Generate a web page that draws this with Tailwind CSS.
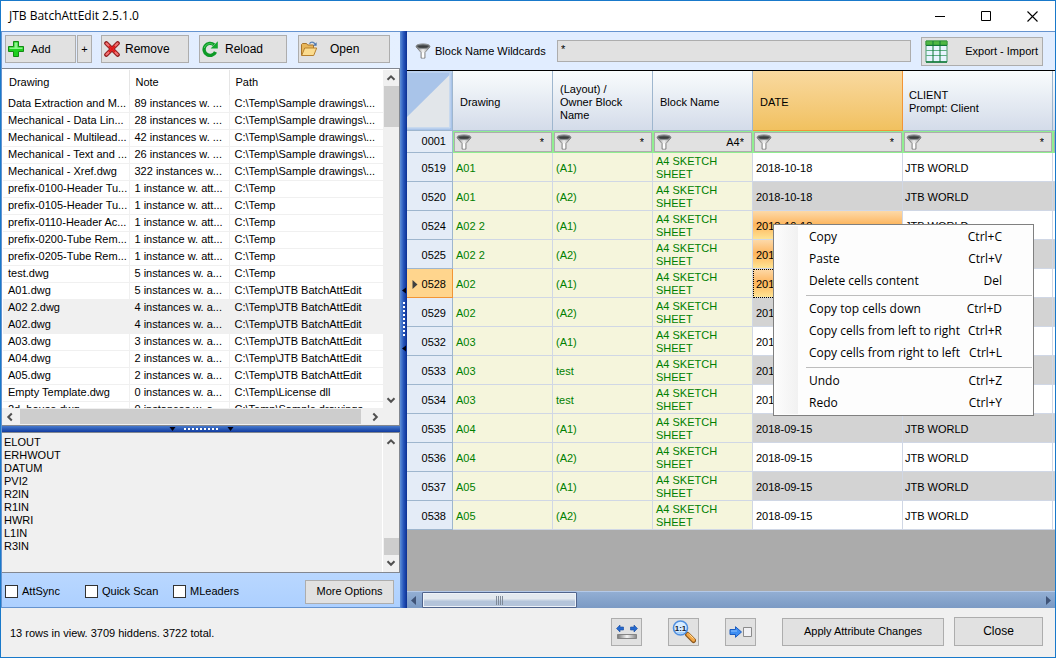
<!DOCTYPE html>
<html lang="en">
<head>
  <meta charset="UTF-8" />
  <meta name="viewport" content="width=device-width, initial-scale=1.0"/>
  <title>JTB BatchAttEdit 2.5.1.0</title>
  <script src="https://cdn.jsdelivr.net/npm/@tailwindcss/browser@4"></script>
</head>
<body class="h-screen overflow-hidden bg-[#f0f0f0] text-black text-[11px] leading-[13px] font-['Liberation_Sans',sans-serif]">

  <!-- Shared icons -->
  <svg class="absolute size-0">
    <linearGradient id="metal" x1="0" x2="1"><stop offset="0" stop-color="#777"/><stop offset=".5" stop-color="#f4f4f4"/><stop offset="1" stop-color="#888"/></linearGradient>
    <symbol id="funnel" viewBox="0 0 16 16">
      <path d="M1.200 4 6 9.500v5.600h4V9.500L14.800 4z" fill="url(#metal)" stroke="#777" stroke-width=".8"/>
      <path d="M7 9.500v5h2v-5z" fill="#fff"/>
      <ellipse cx="8" cy="3.300" rx="7" ry="2.400" fill="#5e6264" stroke="#8e9294"/>
      <ellipse cx="8" cy="3.600" rx="5" ry="1.200" fill="#3c3f40"/>
    </symbol>
    <symbol id="up" viewBox="0 0 16 16"><path d="M4.500 9.800 8 6.300l3.500 3.500" fill="none" stroke="#505050" stroke-width="2"/></symbol>
    <symbol id="down" viewBox="0 0 16 16"><path d="M4.500 6.300 8 9.800l3.500-3.500" fill="none" stroke="#505050" stroke-width="2"/></symbol>
    <symbol id="left" viewBox="0 0 16 16"><path d="M9.800 4.500 6.300 8l3.500 3.500" fill="none" stroke="#505050" stroke-width="2"/></symbol>
    <symbol id="right" viewBox="0 0 16 16"><path d="M6.300 4.500 9.800 8l-3.500 3.500" fill="none" stroke="#505050" stroke-width="2"/></symbol>
  </svg>

  <div class="flex h-full flex-col border border-[#1979ca]">

    <!-- Title bar -->
    <header class="flex h-[30px] shrink-0 items-center bg-white pl-2">
      <h1 class="flex-1 text-[12px] leading-4 font-['Open_Sans',sans-serif]">JTB BatchAttEdit 2.5.1.0</h1>
      <button aria-label="Minimize" class="flex h-full w-[46px] items-center justify-center"><svg class="size-[11px]" viewBox="0 0 11 11"><path d="M0 5.500h10" stroke="#000"/></svg></button>
      <button aria-label="Maximize" class="flex h-full w-[46px] items-center justify-center"><svg class="size-[11px]" viewBox="0 0 11 11"><path d="M.5.5h9v9h-9z" fill="none" stroke="#000"/></svg></button>
      <button aria-label="Close window" class="flex h-full w-[46px] items-center justify-center"><svg class="size-[11px]" viewBox="0 0 11 11"><path d="m.5.5 10 10m0-10-10 10" stroke="#000" stroke-width="1.100"/></svg></button>
    </header>

    <main class="flex min-h-0 flex-1">

      <!-- Drawings pane -->
      <section class="flex w-[399px] shrink-0 flex-col border-t border-l border-[#6593cf]">
        <div class="flex h-9 shrink-0 items-start bg-linear-to-r from-[#dfebff] to-[#e5f0ff] pt-[3px] pl-[3px]">
          <button class="flex h-7 w-[71px] items-center gap-[7px] border border-[#adadad] bg-[#e1e1e1] pl-[2px]">
            <svg class="size-4" viewBox="0 0 16 16"><path d="M5.500.5h5v5h5v5h-5v5h-5v-5h-5v-5h5z" fill="#1fd01f" stroke="#138a13"/><path d="M6.500 1.500h3v5h5v1.500h-13V6.500h5z" fill="#8df58d"/></svg>
            Add
          </button>
          <button class="mr-[9px] ml-px h-7 w-[15px] border border-[#adadad] bg-[#e1e1e1]">+</button>
          <button class="mr-[10px] flex h-7 w-[88px] items-center gap-[5px] border border-[#adadad] bg-[#e1e1e1] pl-[2px] text-[12px]">
            <svg class="size-4" viewBox="0 0 16 16"><path d="m2.300 2.300 11.400 11.400m0-11.400L2.300 13.700" stroke="#8c1616" stroke-width="4.200" stroke-linecap="round"/><path d="m2.500 2.500 11 11m0-11-11 11" stroke="#f27070" stroke-width="2.400" stroke-linecap="round"/><path d="m5 5 6 6m0-6-6 6" stroke="#e01818" stroke-width="2"/></svg>
            Remove
          </button>
          <button class="mr-[11px] flex h-7 w-[88px] items-center gap-[7px] border border-[#adadad] bg-[#e1e1e1] pl-[2px] text-[12px]">
            <svg class="size-4" viewBox="0 0 16 16"><path d="M12 3.800A6 6 0 1 0 13.500 11" fill="none" stroke="#0c9a26" stroke-width="3.400"/><path d="M15.800.3v7.200H8.600z" fill="#14a82e"/><path d="M11 3.400A6 6 0 0 0 2.200 7" fill="none" stroke="#4fce5f"/></svg>
            Reload
          </button>
          <button class="flex h-7 w-[92px] items-center gap-[13px] border border-[#adadad] bg-[#e1e1e1] pl-[2px] text-[12px]">
            <svg class="size-4" viewBox="0 0 16 16"><path d="M.5 14.500v-11l1-1h4l1.200 1.500h5.800v3" fill="#e8b659" stroke="#a8742a"/><path d="m.7 14.500 3-7.500h12l-3 7.500z" fill="#fbdc8f" stroke="#b7812f"/><path d="M8.500 2.700C9.500.7 12.500.3 14 3" fill="none" stroke="#5b83b4" stroke-width="1.300"/><path d="M15.600 1.200v3.600H12z" fill="#4773aa"/></svg>
            Open
          </button>
        </div>

        <!-- Drawing list -->
        <div class="flex min-h-0 flex-[359_1_0%] flex-col border border-l-0 border-[#828790] bg-white">
          <div class="flex min-h-0 flex-1 pt-px">
            <div class="min-w-0 flex-1 overflow-hidden pl-px">
              <table class="w-full table-fixed border-collapse">
                <colgroup><col class="w-[126px]"><col class="w-[100px]"><col></colgroup>
                <thead>
                  <tr class="h-[25px] text-left">
                    <th class="border-r border-[#e5e5e5] pl-[6px] font-normal">Drawing</th>
                    <th class="border-r border-[#e5e5e5] pl-[6px] font-normal">Note</th>
                    <th class="pl-[6px] font-normal">Path</th>
                  </tr>
                </thead>
                <tbody id="drawings"></tbody>
              </table>
            </div>
            <div class="flex w-4 shrink-0 flex-col items-center bg-[#f0f0f0]">
              <svg class="size-4"><use href="#up"/></svg>
              <div class="h-[41px] w-[15px] bg-[#cdcdcd]"></div>
              <svg class="mt-auto size-4"><use href="#down"/></svg>
            </div>
          </div>
          <div class="flex h-[17px] shrink-0 items-center bg-[#f0f0f0] pr-4">
            <svg class="mr-[2px] size-4"><use href="#left"/></svg>
            <div class="mr-[6px] h-[15px] flex-1 bg-[#cdcdcd]"></div>
            <svg class="size-4"><use href="#right"/></svg>
          </div>
        </div>

        <!-- Horizontal splitter -->
        <div class="flex h-[6px] shrink-0 items-center justify-center gap-2 bg-linear-to-b from-[#4679cd] to-[#123ba0]">
          <svg class="h-1 w-[7px]" viewBox="0 0 7 4"><path d="M.5 0h6l-3 4z" fill="#001"/></svg>
          <svg class="h-1 w-[35px]" viewBox="0 0 35 4"><path d="M0 2h35" stroke="#fff" stroke-width="2" stroke-dasharray="2 2"/></svg>
          <svg class="h-1 w-[7px]" viewBox="0 0 7 4"><path d="M.5 0h6l-3 4z" fill="#001"/></svg>
        </div>

        <!-- Attribute tags -->
        <div class="flex min-h-0 flex-[140_1_0%] border border-l-0 border-[#828790] bg-[#f0f0f0]">
          <textarea readonly aria-label="Attribute tags" class="min-w-0 flex-1 resize-none overflow-hidden border-r border-white px-[2px] pt-[3px] outline-none">ELOUT
ERHWOUT
DATUM
PVI2
R2IN
R1IN
HWRI
L1IN
R3IN</textarea>
          <div class="flex w-4 shrink-0 flex-col items-center py-px">
            <svg class="size-4"><use href="#up"/></svg>
            <div class="mt-auto h-[17px] w-[15px] bg-[#cdcdcd]"></div>
            <svg class="size-4"><use href="#down"/></svg>
          </div>
        </div>

        <!-- Options -->
        <div class="flex h-[35px] shrink-0 items-center border-b border-[#6593cf] bg-linear-to-b from-[#b9d7ff] to-[#add0ff] pt-[3px] pr-[6px] pl-[3px]">
          <label class="flex w-20 items-center gap-1"><input type="checkbox" class="size-[13px] appearance-none border border-[#333] bg-white">AttSync</label>
          <label class="flex w-[88px] items-center gap-1"><input type="checkbox" class="size-[13px] appearance-none border border-[#333] bg-white">Quick Scan</label>
          <label class="flex items-center gap-1"><input type="checkbox" class="size-[13px] appearance-none border border-[#333] bg-white">MLeaders</label>
          <button class="ml-auto h-6 w-[89px] border border-[#adadad] bg-[#e1e1e1]">More Options</button>
        </div>
      </section>

      <!-- Vertical splitter -->
      <div class="flex w-[7px] shrink-0 flex-col items-center justify-center gap-2 bg-linear-to-r from-[#5f90d8] via-[#2856bb] to-[#0b2f93]">
        <svg class="h-[7px] w-1" viewBox="0 0 4 7"><path d="M4 .5v6l-4-3z" fill="#001"/></svg>
        <svg class="h-[35px] w-1" viewBox="0 0 4 35"><path d="M2 0v35" stroke="#fff" stroke-width="2" stroke-dasharray="2 2"/></svg>
        <svg class="h-[7px] w-1" viewBox="0 0 4 7"><path d="M4 .5v6l-4-3z" fill="#001"/></svg>
      </div>

      <!-- Block grid pane -->
      <section class="flex min-w-0 flex-1 flex-col border-t border-[#6593cf]">
        <div class="flex h-[39px] shrink-0 items-center border-b border-black bg-[#e1edff] pr-[12px] pl-2">
          <svg class="mr-1 size-4"><use href="#funnel"/></svg>
          <label for="wildcards" class="w-[122px]">Block Name Wildcards</label>
          <input id="wildcards" type="text" value="*" class="mr-[10px] h-[22px] min-w-0 flex-1 border border-[#adadad] bg-[#e1e1e1] px-[3px] pb-1 outline-none">
          <button class="flex h-[29px] w-[122px] items-center justify-between border border-[#adadad] bg-[#e1e1e1] pr-1 pl-[3px]">
            <svg class="size-[23px]" viewBox="0 0 23 23"><path d="M1 1h21v21H1z" fill="#e8f4ff" stroke="#4a9a6a"/><path d="M1 1h21v4H1z" fill="#4fb844" stroke="#3a9a3a"/><path d="M1 10.500h21M1 15.500h21" stroke="#5fae84"/><path d="M1 5.500h21M8 1v21M15 1v21" stroke="#0f7838"/><path d="M1 22h21" stroke="#0f7838" stroke-width="1.500"/></svg>
            Export - Import
          </button>
        </div>

        <div class="relative min-h-0 flex-1 bg-[#ababab]">
          <table class="w-full table-fixed border-separate border-spacing-0">
            <colgroup><col class="w-[46px]"><col class="w-[100px]"><col class="w-[100px]"><col class="w-[100px]"><col class="w-[150px]"><col class="w-[150px]"><col></colgroup>
            <thead>
              <tr class="h-[60px] bg-linear-to-b from-[#f9fcfd] to-[#d3dbe9] text-left">
                <th class="border-r border-b border-[#9eb6ce] bg-[#a9c4e9] p-0">
                  <svg class="h-[59px] w-full" viewBox="0 0 45 59" preserveAspectRatio="none"><path d="M42.500 4v52.500H0V46z" fill="#e2e6ea"/><path d="M43 2v55H0M0 1h45" fill="none" stroke="#cbdcf2"/></svg>
                </th>
                <th class="border-r border-b border-[#9eb6ce] px-[7px] pt-[3px] font-normal">Drawing</th>
                <th class="border-r border-b border-[#9eb6ce] px-[7px] pt-[3px] font-normal">(Layout) /<br>Owner Block<br>Name</th>
                <th class="border-r border-b border-[#9eb6ce] px-[7px] pt-[3px] font-normal">Block Name</th>
                <th class="border-r border-b border-[#f29536] bg-linear-to-b from-[#f9d99f] to-[#f1c15f] px-[7px] pt-[3px] font-normal">DATE</th>
                <th class="border-r border-b border-[#9eb6ce] px-[6px] pt-[3px] font-normal">CLIENT<br>Prompt: Client</th>
                <th class="border-b border-[#9eb6ce]"></th>
              </tr>
              <tr class="h-[22px]" id="filters"></tr>
            </thead>
            <tbody id="blocks"></tbody>
          </table>

          <!-- Context menu -->
          <div role="menu" class="absolute top-[153px] left-[366px] w-[261px] border border-[#808080] bg-[#fdfdfd] py-px pr-px pl-[2px] text-[12px] leading-4 font-['Open_Sans',sans-serif]">
            <div class="flex">
              <div class="w-[22px] shrink-0 bg-linear-to-r from-[#fcfcfc] to-[#f1f1f1]"></div>
              <div class="flex-1 pl-2">
                <button role="menuitem" class="flex h-[22px] w-full items-center justify-between pr-[30px] pl-[3px]">Copy<span>Ctrl+C</span></button>
                <button role="menuitem" class="flex h-[22px] w-full items-center justify-between pr-[30px] pl-[3px]">Paste<span>Ctrl+V</span></button>
                <button role="menuitem" class="flex h-[22px] w-full items-center justify-between pr-[30px] pl-[3px]">Delete cells content<span>Del</span></button>
                <hr class="mt-[3px] mb-[2px] border-[#bdbdbd]">
                <button role="menuitem" class="flex h-[22px] w-full items-center justify-between pr-[30px] pl-[3px]">Copy top cells down<span>Ctrl+D</span></button>
                <button role="menuitem" class="flex h-[22px] w-full items-center justify-between pr-[30px] pl-[3px]">Copy cells from left to right<span>Ctrl+R</span></button>
                <button role="menuitem" class="flex h-[22px] w-full items-center justify-between pr-[30px] pl-[3px]">Copy cells from right to left<span>Ctrl+L</span></button>
                <hr class="mt-[3px] mb-[2px] border-[#bdbdbd]">
                <button role="menuitem" class="flex h-[22px] w-full items-center justify-between pr-[30px] pl-[3px]">Undo<span>Ctrl+Z</span></button>
                <button role="menuitem" class="flex h-[22px] w-full items-center justify-between pr-[30px] pl-[3px]">Redo<span>Ctrl+Y</span></button>
              </div>
            </div>
          </div>
        </div>

        <!-- Grid scrollbar -->
        <div class="flex h-[17px] shrink-0 items-center border-t border-[#b4c9e8] bg-linear-to-b from-[#92aed3] to-[#7b9ac4] px-1">
          <svg class="mr-[6px] h-[9px] w-[5px]" viewBox="0 0 5 9"><path d="M5 0v9L0 4.500z" fill="#3f5377"/></svg>
          <div class="flex h-4 w-[155px] items-center justify-center rounded-[1px] border border-[#50648c] bg-linear-to-b from-[#e3e9ef] from-40% to-[#b4c4da] to-60% outline-1 -outline-offset-2 outline-[#eef3f9]">
            <svg class="h-[9px] w-2" viewBox="0 0 8 9"><path d="M.5 0v9m2-9v9m2-9v9m2-9v9" stroke="#7f8a98"/></svg>
          </div>
          <svg class="ml-auto h-[9px] w-[5px]" viewBox="0 0 5 9"><path d="M0 0v9l5-4.500z" fill="#3f5377"/></svg>
        </div>
      </section>
    </main>

    <!-- Footer -->
    <footer class="flex h-[49px] shrink-0 items-center pr-[12px] pb-[2px] pl-[9px]">
      <p class="flex-1 pt-[3px]">13 rows in view. 3709 hiddens. 3722 total.</p>
      <button aria-label="Fit column width" class="mr-[26px] flex h-7 w-[31px] items-center justify-center border border-[#adadad] bg-[#e1e1e1]">
        <svg class="h-4 w-[22px]" viewBox="0 0 22 16"><path d="M.5 4.500 4 1v2h3.500v3H4v2zM21.500 4.500 18 1v2h-3.500v3H18v2z" fill="#2569cf" stroke="#174a9c" stroke-width=".6"/><path d="M1.500 10.500h19v4h-19z" fill="url(#metal)" stroke="#858585"/></svg>
      </button>
      <button aria-label="Zoom to block" class="mr-[26px] flex h-7 w-[31px] items-center justify-center border border-[#adadad] bg-[#e1e1e1]">
        <svg class="size-6" viewBox="0 0 24 24"><path d="m15.500 14.500 6 6" stroke="#8a561c" stroke-width="5" stroke-linecap="round"/><path d="m16 14.500 5.500 5.500" stroke="#f2a646" stroke-width="3.200" stroke-linecap="round"/><path d="m17.500 14.500 4 4" stroke="#ffdf9a"/><circle cx="8.500" cy="8" r="7" fill="#d6ebff" stroke="#4f8fe0" stroke-width="1.600"/><path d="M3.500 12a7 7 0 0 0 10 0z" fill="#a3cffa"/><text x="8.500" y="11" text-anchor="middle" font-size="8" font-weight="bold" fill="#101a30">1:1</text></svg>
      </button>
      <button aria-label="Go to block" class="mr-[26px] flex h-7 w-[31px] items-center justify-center border border-[#adadad] bg-[#e1e1e1]">
        <svg class="h-3 w-6" viewBox="0 0 24 12"><path d="M1 3.500h5.500V.7L12.500 6l-6 5.300V8.500H1z" fill="#3c8ef3" stroke="#1c5cc0"/><path d="M2 5h6" stroke="#8fc2ff"/><path d="M14.500 1.500h8v9h-8z" fill="#f1f1f4" stroke="#8b8b8b"/></svg>
      </button>
      <button class="mr-[10px] h-7 w-[162px] border border-[#adadad] bg-[#e1e1e1]">Apply Attribute Changes</button>
      <button class="h-[29px] w-[89px] border border-[#adadad] bg-[#e1e1e1] text-[12px]">Close</button>
    </footer>
  </div>

  <script>
    const drawings = [
      ['Data Extraction and M...', '89 instances w. ...', 'C:\\Temp\\Sample drawings\\...'],
      ['Mechanical - Data Lin...', '28 instances w. ...', 'C:\\Temp\\Sample drawings\\...'],
      ['Mechanical - Multilead...', '42 instances w. ...', 'C:\\Temp\\Sample drawings\\...'],
      ['Mechanical - Text and ...', '26 instances w. ...', 'C:\\Temp\\Sample drawings\\...'],
      ['Mechanical - Xref.dwg', '322 instances w...', 'C:\\Temp\\Sample drawings\\...'],
      ['prefix-0100-Header Tu...', '1 instance w. att...', 'C:\\Temp'],
      ['prefix-0105-Header Tu...', '1 instance w. att...', 'C:\\Temp'],
      ['prefix-0110-Header Ac...', '1 instance w. att...', 'C:\\Temp'],
      ['prefix-0200-Tube Rem...', '1 instance w. att...', 'C:\\Temp'],
      ['prefix-0205-Tube Rem...', '1 instance w. att...', 'C:\\Temp'],
      ['test.dwg', '5 instances w. a...', 'C:\\Temp'],
      ['A01.dwg', '5 instances w. a...', 'C:\\Temp\\JTB BatchAttEdit'],
      ['A02 2.dwg', '4 instances w. a...', 'C:\\Temp\\JTB BatchAttEdit', true],
      ['A02.dwg', '4 instances w. a...', 'C:\\Temp\\JTB BatchAttEdit', true],
      ['A03.dwg', '3 instances w. a...', 'C:\\Temp\\JTB BatchAttEdit'],
      ['A04.dwg', '2 instances w. a...', 'C:\\Temp\\JTB BatchAttEdit'],
      ['A05.dwg', '2 instances w. a...', 'C:\\Temp\\JTB BatchAttEdit'],
      ['Empty Template.dwg', '0 instances w. a...', 'C:\\Temp\\License dll'],
      ['2d_house.dwg', '0 instances w. a...', 'C:\\Temp\\Sample drawings']
    ];

    document.getElementById('drawings').innerHTML = drawings.map(([name, note, path, selected]) => `
      <tr class="h-[17px] ${selected ? 'bg-[#f0f0f0]' : 'bg-white'}">
        <td class="overflow-hidden border-r border-b border-[#f0f0f0] pl-[5px] whitespace-nowrap">${name}</td>
        <td class="overflow-hidden border-r border-b border-[#f0f0f0] pl-[5px] whitespace-nowrap">${note}</td>
        <td class="overflow-hidden border-b border-[#f0f0f0] pl-[5px] whitespace-nowrap">${path}</td>
      </tr>`).join('');

    const filters = [['Drawing', '*'], ['Layout', '*'], ['Block Name', 'A4*'], ['DATE', '*'], ['CLIENT', '*']];

    document.getElementById('filters').innerHTML = `
      <th class="border-r border-b border-[#9eb6ce] bg-[#e4ecf7] pr-[6px] text-right font-normal">0001</th>` +
      filters.map(([column, value]) => `
      <td class="border border-[#90ee90] bg-[#e1e1e1] p-0">
        <div class="flex h-5 items-center border border-[#adadad] pr-[7px] pl-px">
          <svg class="size-4 shrink-0"><use href="#funnel"/></svg>
          <input type="text" aria-label="Filter ${column}" value="${value}" class="min-w-0 flex-1 text-right outline-none">
        </div>
      </td>`).join('') + '<td class="border border-r-0 border-[#90ee90] bg-[#adadad]"></td>';

    const blocks = [
      ['0519', 'A01', '(A1)', '2018-10-18'],
      ['0520', 'A01', '(A2)', '2018-10-18'],
      ['0524', 'A02 2', '(A1)', '2018-10-18', 'selected'],
      ['0525', 'A02 2', '(A2)', '2018-10-18', 'selected'],
      ['0528', 'A02', '(A1)', '2018-10-18', 'current'],
      ['0529', 'A02', '(A2)', '2018-10-18'],
      ['0532', 'A03', '(A1)', '2018-09-15'],
      ['0533', 'A03', 'test', '2018-09-15'],
      ['0534', 'A03', 'test', '2018-09-15'],
      ['0535', 'A04', '(A1)', '2018-09-15'],
      ['0536', 'A04', '(A2)', '2018-09-15'],
      ['0537', 'A05', '(A1)', '2018-09-15'],
      ['0538', 'A05', '(A2)', '2018-09-15']
    ];

    const marker = '<svg class="h-[9px] w-[6px]" viewBox="0 0 6 9"><path d="M.5 0v9L5.500 4.500z" fill="#404040"/></svg>';

    document.getElementById('blocks').innerHTML = blocks.map(([id, drawing, layout, date, state], i) => {
      const head = state === 'current' ? 'border-[#f29536] bg-[#ffd58d]' : 'border-[#9eb6ce] bg-[#e4ecf7]';
      const cell = state ? 'bg-linear-to-b from-[#fcd9a8] via-[#fdb55a] to-[#fee494]' : '';
      const focus = state === 'current' ? 'outline-1 -outline-offset-1 outline-dotted outline-black' : '';
      return `
      <tr class="h-[29px] ${i % 2 ? 'bg-[#d3d3d3]' : 'bg-white'}">
        <th class="border-r border-b ${head} p-0 pt-[2px] font-normal"><div class="flex items-center justify-end gap-1 pr-[6px]">${state === 'current' ? marker : ''}${id}</div></th>
        <td class="border-r border-b border-[#d0d7e5] bg-[#f5f5dc] p-0 pt-[2px] pl-[3px] text-[#008000]">${drawing}</td>
        <td class="border-r border-b border-[#d0d7e5] bg-[#f5f5dc] p-0 pt-[2px] pl-[3px] text-[#008000]">${layout}</td>
        <td class="border-r border-b border-[#d0d7e5] bg-[#f5f5dc] p-0 pt-[2px] pl-[3px] text-[#008000]">A4 SKETCH<br>SHEET</td>
        <td class="border-r border-b border-[#d0d7e5] ${cell} ${focus} p-0 pt-[2px] pl-[3px]">${date}</td>
        <td class="border-r border-b border-[#d0d7e5] p-0 pt-[2px] pl-[2px]">JTB WORLD</td>
        <td class="border-b border-[#d0d7e5] p-0"></td>
      </tr>`;
    }).join('');
  </script>
</body>
</html>
